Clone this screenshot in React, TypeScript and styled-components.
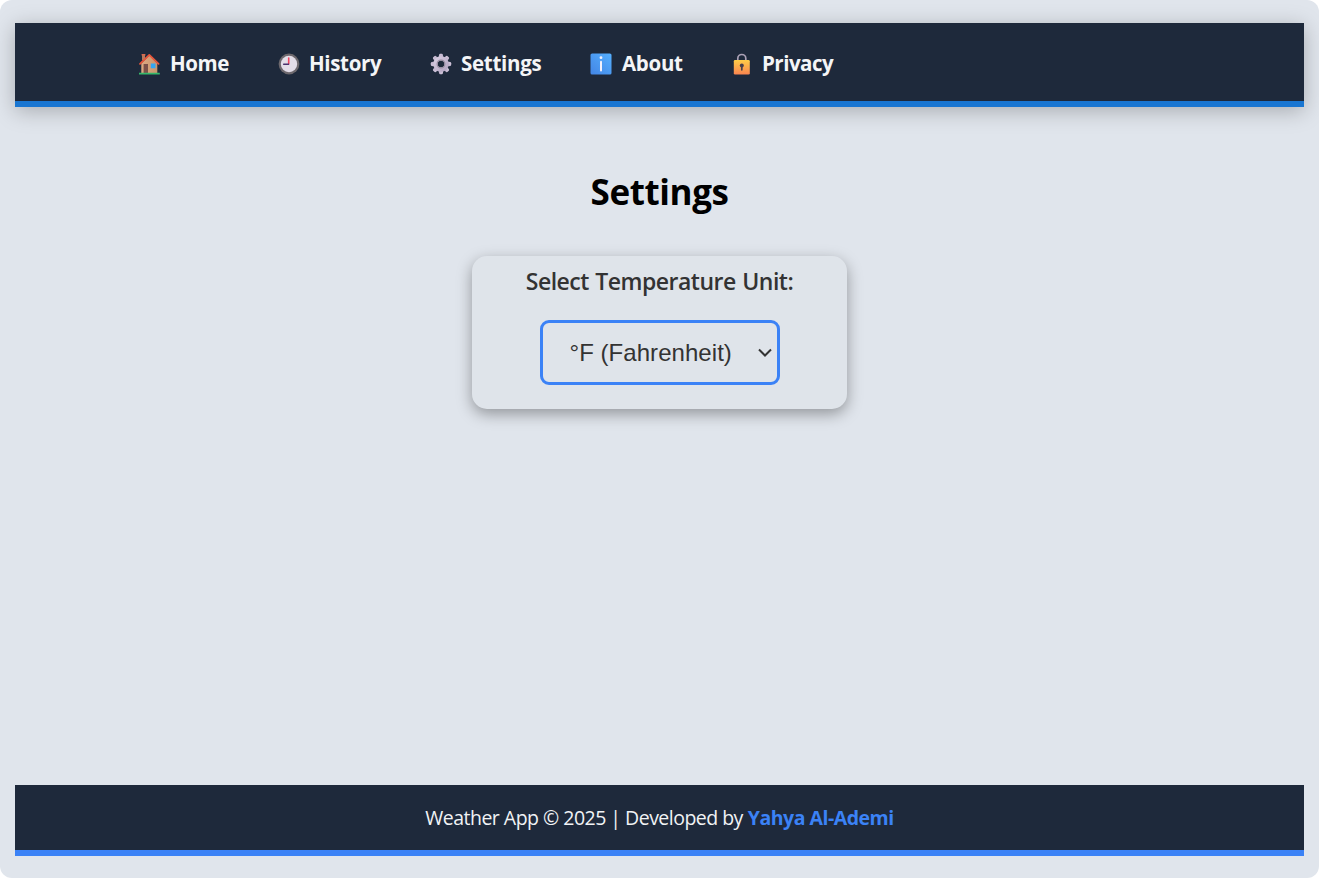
import React from "react";
import styled, { createGlobalStyle } from "styled-components";

const GlobalStyle = createGlobalStyle`
  * { box-sizing: border-box; }
  body {
    margin: 0;
    background: #ffffff;
    font-family: "Segoe UI", "Open Sans", "Noto Sans", sans-serif;
  }
`;

const Page = styled.div`
  display: flex;
  flex-direction: column;
  height: 878px;
  padding: 23px 15px 22px;
  background: #e0e5ec;
  border-radius: 12px;
  overflow: hidden;
`;

const Header = styled.header`
  flex: none;
  height: 84px;
  padding-left: 123px;
  background: #1e293b;
  border-bottom: 6px solid #1976d2;
  box-shadow: 0 4px 20px rgba(0, 0, 0, 0.25);
`;

const Nav = styled.nav`
  display: flex;
  height: 78px;
  padding-top: 2px;
  align-items: center;
`;

const NavLink = styled.a<{ $width: number; $gap: number; $spacing: number }>`
  display: flex;
  align-items: center;
  gap: ${(p) => p.$gap}px;
  width: ${(p) => p.$width}px;
  color: #f4f5f7;
  font-size: 20.5px;
  line-height: 28px;
  font-weight: 700;
  letter-spacing: ${(p) => p.$spacing}px;
  white-space: nowrap;
  text-decoration: none;
`;

const Icon = styled.svg`
  flex: none;
  width: 22px;
  height: 22px;
  margin-top: 1px;
`;

const Main = styled.main`
  flex: 1;
  display: flex;
  flex-direction: column;
  align-items: center;
`;

const Title = styled.h1`
  margin: 61px 0 0;
  height: 48px;
  color: #000;
  font-size: 35px;
  line-height: 48px;
  font-weight: 700;
  letter-spacing: -0.4px;
`;

const Card = styled.section`
  display: flex;
  flex-direction: column;
  align-items: center;
  width: 375px;
  height: 153px;
  margin-top: 40px;
  padding-top: 8px;
  background: #dfe4ea;
  border-radius: 15px;
  box-shadow: 0 5px 15px rgba(0, 0, 0, 0.35);
`;

const Label = styled.label`
  height: 34px;
  color: #333;
  font-size: 23px;
  line-height: 34px;
  font-weight: 600;
  letter-spacing: -0.5px;
  word-spacing: 1px;
  white-space: nowrap;
`;

const SelectBox = styled.div`
  display: flex;
  align-items: center;
  justify-content: space-between;
  width: 240px;
  height: 65px;
  margin-top: 22px;
  padding: 0 4px 0 27px;
  border: 3px solid #3b82f6;
  border-radius: 9px;
  color: #333;
  font-family: "Liberation Sans", Arial, sans-serif;
  font-size: 24px;
  letter-spacing: 0.05px;
  white-space: nowrap;
`;

const Chevron = styled.svg`
  width: 16px;
  height: 16px;
`;

const Footer = styled.footer`
  flex: none;
  display: flex;
  justify-content: center;
  gap: 5px;
  height: 71px;
  padding-top: 19px;
  background: #1e293b;
  border-bottom: 6px solid #3b82f6;
  color: #f1f3f5;
  font-size: 19.5px;
  line-height: 28px;
  white-space: nowrap;
`;

const Credit = styled.span`
  letter-spacing: -0.52px;
`;

const Author = styled.a`
  color: #3b82f6;
  font-weight: 700;
  letter-spacing: -0.5px;
  text-decoration: none;
`;

const HomeIcon = () => (
  <Icon viewBox="0 0 22 22">
    <defs>
      <linearGradient id="wall" x1="0" x2="1">
        <stop offset="0" stopColor="#dda982" />
        <stop offset="1" stopColor="#c9966c" />
      </linearGradient>
    </defs>
    <path d="M4 1.6h3V7H4z" fill="#b9795c" />
    <path d="M3.6 1h3.8v1.4H3.6z" fill="#d9694e" />
    <path d="M11.3 2.5 19.3 10.5v10H3.3v-10z" fill="url(#wall)" />
    <path d="M5.6 11h4.4v9.5H5.6z" fill="#7b5048" />
    <path d="M12.8 10.5h4.7v4.7h-4.7z" fill="#32a6f2" />
    <path d="m2 10.8 9.3-8.9 9.3 8.9" fill="none" stroke="#e9563c" strokeWidth="1.8" strokeLinecap="round" strokeLinejoin="round" />
    <path d="M1 19.8h20.8v1.6H1z" fill="#35b86b" />
  </Icon>
);

const ClockIcon = () => (
  <Icon viewBox="0 0 22 22">
    <circle cx="11" cy="11" r="10.4" fill="#6d686d" />
    <circle cx="11" cy="11" r="8.2" fill="#e3dde8" />
    <path d="M10.7 10.8V5" stroke="#ef4560" strokeWidth="1.6" strokeLinecap="round" />
    <path d="M10.5 11.3H5.7" stroke="#49316c" strokeWidth="1.5" strokeLinecap="round" />
  </Icon>
);

const GearIcon = () => (
  <Icon viewBox="0 0 22 22">
    <defs>
      <linearGradient id="gear" x1="0" x2="1" y1="0" y2="1">
        <stop offset="0" stopColor="#d6cbdf" />
        <stop offset="1" stopColor="#b5a6c3" />
      </linearGradient>
    </defs>
    {[0, 45, 90, 135, 180, 225, 270, 315].map((angle) => (
      <path key={angle} d="m8.6 5 .5-3.3Q9.3.8 10.2.8h1.6q.9 0 1.1.9l.5 3.3z" fill="url(#gear)" transform={`rotate(${angle} 11 11)`} />
    ))}
    <circle cx="11" cy="11" r="5.5" fill="none" stroke="url(#gear)" strokeWidth="4.4" />
    <circle cx="11" cy="11" r="3.9" fill="none" stroke="#958a9e" strokeWidth="1.1" />
  </Icon>
);

const InfoIcon = () => (
  <Icon viewBox="0 0 22 22">
    <defs>
      <linearGradient id="info" x1="1" x2="0" y1="0" y2="1">
        <stop offset="0" stopColor="#55b0ff" />
        <stop offset="1" stopColor="#4385e5" />
      </linearGradient>
    </defs>
    <rect x=".5" y=".5" width="21" height="21" rx="1.6" fill="url(#info)" />
    <circle cx="11" cy="4.7" r="1.4" fill="#f3f1fa" />
    <path d="M11 8.8v8.7" stroke="#f3f1fa" strokeWidth="2" strokeLinecap="round" />
  </Icon>
);

const LockIcon = () => (
  <Icon viewBox="0 0 22 22">
    <defs>
      <linearGradient id="lock" x1="0" x2="0" y1="0" y2="1">
        <stop offset="0" stopColor="#ffcc47" />
        <stop offset="1" stopColor="#fa8550" />
      </linearGradient>
    </defs>
    <path d="M6.8 9V5.5a4 4 0 0 1 8 0V9" fill="none" stroke="#aaa0b5" strokeWidth="1.7" />
    <rect x="2.8" y="7" width="16" height="14.4" rx="1.2" fill="url(#lock)" />
    <circle cx="10.8" cy="12.5" r="2" fill="#493f4b" />
    <path d="M10.8 12.5v4.3" stroke="#493f4b" strokeWidth="1.7" strokeLinecap="round" />
  </Icon>
);

const links = [
  { text: "Home", icon: HomeIcon, width: 140, gap: 10, spacing: -0.4 },
  { text: "History", icon: ClockIcon, width: 152, gap: 9, spacing: -0.35 },
  { text: "Settings", icon: GearIcon, width: 160, gap: 9, spacing: -0.3 },
  { text: "About", icon: InfoIcon, width: 141, gap: 10, spacing: -0.3 },
  { text: "Privacy", icon: LockIcon, width: 110, gap: 9, spacing: -0.5 },
];

export default function App() {
  return (
    <>
      <GlobalStyle />
      <Page>
        <Header>
          <Nav>
            {links.map(({ text, icon: LinkIcon, width, gap, spacing }) => (
              <NavLink key={text} $width={width} $gap={gap} $spacing={spacing}>
                <LinkIcon />
                <span>{text}</span>
              </NavLink>
            ))}
          </Nav>
        </Header>
        <Main>
          <Title>Settings</Title>
          <Card>
            <Label>Select Temperature Unit:</Label>
            <SelectBox>
              <span>°F (Fahrenheit)</span>
              <Chevron viewBox="0 0 16 16">
                <path d="m2 4.5 6 6 6-6" fill="none" stroke="#333" strokeWidth="2" />
              </Chevron>
            </SelectBox>
          </Card>
        </Main>
        <Footer>
          <Credit>Weather App © 2025 | Developed by</Credit>
          <Author>Yahya Al-Ademi</Author>
        </Footer>
      </Page>
    </>
  );
}
